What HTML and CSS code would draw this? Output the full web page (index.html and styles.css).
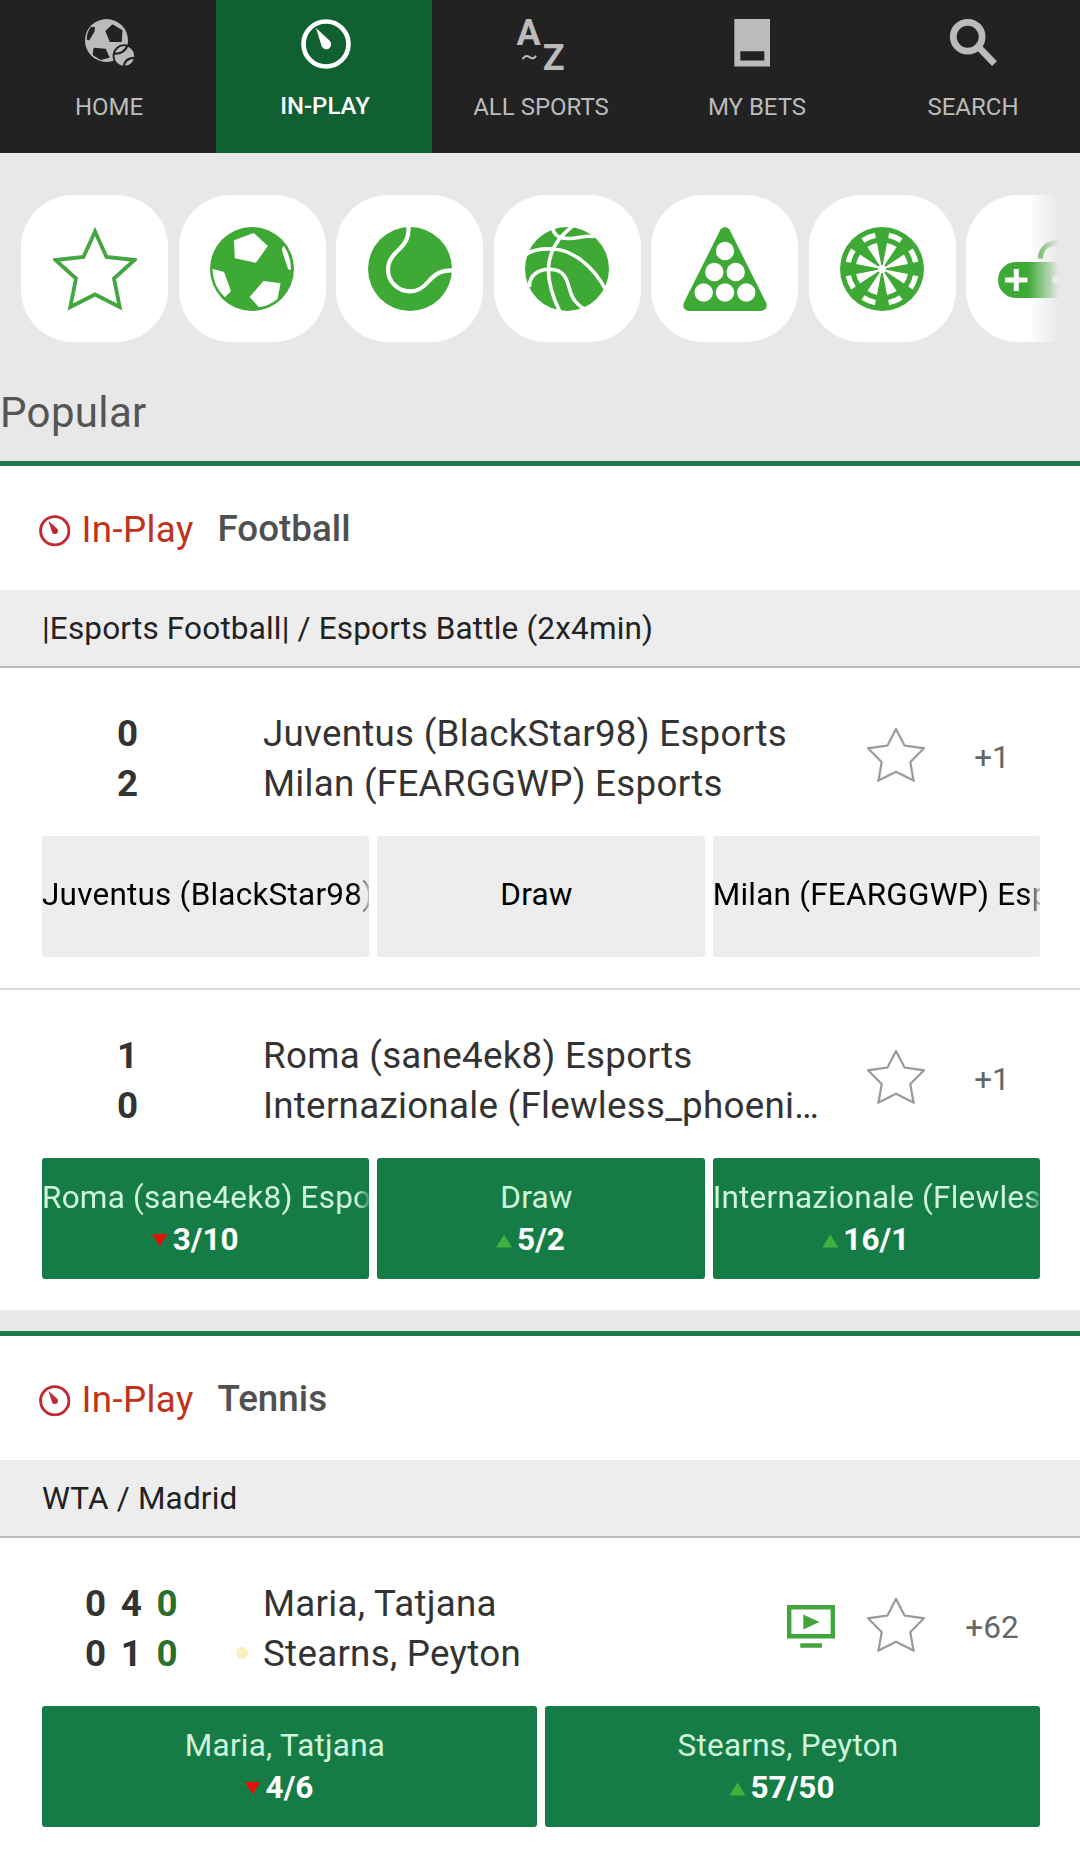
FILE: index.html
```html
<!DOCTYPE html>
<html lang="en">
<head>
<meta charset="utf-8">
<title>In-Play</title>
<link rel="stylesheet" href="styles.css">
</head>
<body>
<svg class="defs" aria-hidden="true">
  <symbol id="clock" viewBox="0 0 50 50">
    <circle cx="25" cy="25" r="22.5" fill="none" stroke="currentColor" stroke-width="4.6"/>
    <path d="M15 9 L28.5 21.5 A5 5 0 1 1 20.3 26 Z" fill="currentColor"/>
  </symbol>
  <symbol id="star" viewBox="0 0 58 54">
    <path d="M29 1 L37.5 17.5 L57 20.300 L43.300 34 L46.500 52.500 L29 43.700 L11.500 52.500 L14.700 34 L1 20.300 L20.500 17.500 Z" fill="none" stroke="currentColor" stroke-width="2.200"/>
  </symbol>
</svg>

<nav class="tabs">
  <a class="tab">
    <svg class="tab-icon" viewBox="78 16 60 56">
      <g transform="translate(85 19)">
        <circle cx="21.5" cy="21.500" r="21.500" fill="#bbb"/>
        <path fill="#222" d="M27.500 5.300 37.500 11.300 36.800 23 24.800 23 20.300 12Z M5.500 8.500 Q8 7 10 8.300 L9.600 12.300 4.500 21 Q3 22 1.700 20.300 Q2 13 5.500 8.500Z M8.600 28.700 20.700 29.700 24.800 38.700 15.500 41 7.600 36Z"/>
        <circle cx="39.300" cy="37" r="11.700" fill="#222"/>
        <circle cx="39.300" cy="37" r="9.900" fill="#bbb"/>
        <path d="M29 34.500 C35 35.500 41 32 42.400 26 M39 48 C39 42 43 39 50 38.800" fill="none" stroke="#222" stroke-width="2.200"/>
      </g>
    </svg>
    <span>HOME</span>
  </a>
  <a class="tab tab-active">
    <svg class="tab-icon" viewBox="294 16 60 56"><use href="#clock" x="301" y="19" width="50" height="50"/></svg>
    <span>IN-PLAY</span>
  </a>
  <a class="tab">
    <svg class="tab-icon az" viewBox="510 16 60 56">
      <text x="516.500" y="44.700" font-size="36">A</text>
      <text x="542.700" y="70" font-size="36">Z</text>
      <path d="M522.500 59.300 C526 53.500 529 57 531 58 C533 58.800 535 57.500 536 55.700" fill="none" stroke="#bbb" stroke-width="2"/>
    </svg>
    <span>ALL SPORTS</span>
  </a>
  <a class="tab">
    <svg class="tab-icon" viewBox="726 16 60 56"><path fill="#bbb" fill-rule="evenodd" d="M734.300 19H770V66.500H734.300Z M740.300 51.300V60.500H764.300V51.300Z"/></svg>
    <span>MY BETS</span>
  </a>
  <a class="tab">
    <svg class="tab-icon" viewBox="942 16 60 56"><g fill="none" stroke="#bbb" stroke-width="6.800"><circle cx="967.700" cy="36.700" r="14.400"/><path d="M978 46.500 L994.500 63.700"/></g></svg>
    <span>SEARCH</span>
  </a>
</nav>

<div class="sports">
  <a class="sport"><svg viewBox="0 0 84 84"><path d="M42 4.500 L53.500 30 L81.500 33 L61 51.500 L66.700 80 L42 67.500 L17.300 80 L23 51.500 L2.500 33 L30.500 30 Z" fill="none" stroke="#43a640" stroke-width="3.800"/></svg></a>
  <a class="sport"><svg viewBox="0 0 84 84"><circle cx="42" cy="42" r="42" fill="#3ea935"/><path fill="#fff" d="M24 13.300 43.700 6 57.900 19 45.800 35.700 24.800 31.300Z M73.700 18.700 L72 21.300 72.700 25.700 78.200 42.300 81 43 Q81 29 73.700 18.700Z M53.400 54 70.600 56.300 67.500 72 Q59 79 48.900 80.300 L39.600 70Z M2.400 41.700 14.100 45 21 64.300 14.800 70.300 Q3 59 2.400 41.700Z"/></svg></a>
  <a class="sport"><svg viewBox="0 0 84 84"><circle cx="42" cy="42" r="42" fill="#3ea935"/><path d="M40.600 -1 C41 10 38 16 31 22.500 C24 28.500 20 34 20 42.500 C20 55 30 64.300 42 64.300 C50 64.300 55 61 61 54 C68 46 73 43.500 85 43.300" fill="none" stroke="#fff" stroke-width="4.200"/></svg></a>
  <a class="sport"><svg viewBox="0 0 84 84"><circle cx="42" cy="42" r="42" fill="#3ea935"/><path d="M49 -2 Q32 11 27 25 Q17 48 35 85 M27.300 0 Q29 9 36 10.500 C48 14 56 8 69 9.500 M0 28 C8 22 18 21.500 28 22 C48 23 68 39 81 63 M4.500 60 C4 48 14 42 25 42.300 C47 43 41 64 50 74 Q54 79 61 83" fill="none" stroke="#fff" stroke-width="3.600"/></svg></a>
  <a class="sport"><svg viewBox="0 0 84 84"><path d="M37.500 2.500 Q42 -2.500 46.500 2.500 L83.300 76 Q85 82.500 78.500 84 H5.500 Q-1 82.500 .7 76Z" fill="#3ea935"/><g fill="#fff"><circle cx="42" cy="24" r="9.200"/><circle cx="31.300" cy="45" r="9.200"/><circle cx="52.700" cy="45" r="9.200"/><circle cx="20.700" cy="65.500" r="9.200"/><circle cx="42" cy="65.500" r="9.200"/><circle cx="63.300" cy="65.500" r="9.200"/></g></svg></a>
  <a class="sport"><svg viewBox="0 0 84 84"><circle cx="42" cy="42" r="42" fill="#3ea935"/><g fill="none" stroke="#fff" stroke-dasharray="1 1" stroke-dashoffset="-.5"><circle cx="42" cy="42" r="34.300" stroke-width="5.400" pathLength="16"/><circle cx="42" cy="42" r="13.200" stroke-width="26.400" pathLength="16"/></g><circle cx="42" cy="42" r="4" fill="#fff"/></svg></a>
  <a class="sport"><svg viewBox="0 0 84 84"><rect x="0" y="35" width="84" height="36" rx="18" fill="#3ea935"/><path d="M42.500 31.500 C42.500 22 49 16 61 15.500" fill="none" stroke="#3ea935" stroke-width="5"/><path d="M7 53H29.500M18.300 42V64" stroke="#fff" stroke-width="5"/><circle cx="58.500" cy="52.700" r="4.300" fill="#fff"/></svg></a>
</div>

<h2 class="heading">Popular</h2>

<section class="group">
  <header class="group-head">
    <svg class="group-clock"><use href="#clock"/></svg>
    <span class="live">In-Play</span>
    <span class="name">Football</span>
  </header>
  <div class="league">|Esports Football| / Esports Battle (2x4min)</div>

  <article class="event">
    <div class="info">
      <div class="scores single"><div class="score"><b>0</b></div><div class="score"><b>2</b></div></div>
      <div class="teams"><div>Juventus (BlackStar98) Esports</div><div>Milan (FEARGGWP) Esports</div></div>
      <svg class="fav"><use href="#star"/></svg>
      <span class="more">+1</span>
    </div>
    <div class="odds suspended">
      <a class="pick"><span class="label long">Juventus (BlackStar98) Esports</span></a>
      <a class="pick"><span class="label">Draw</span></a>
      <a class="pick"><span class="label long">Milan (FEARGGWP) Esports</span></a>
    </div>
  </article>

  <article class="event">
    <div class="info">
      <div class="scores single"><div class="score"><b>1</b></div><div class="score"><b>0</b></div></div>
      <div class="teams"><div>Roma (sane4ek8) Esports</div><div>Internazionale (Flewless_phoeni…</div></div>
      <svg class="fav"><use href="#star"/></svg>
      <span class="more">+1</span>
    </div>
    <div class="odds">
      <a class="pick"><span class="label long">Roma (sane4ek8) Esports</span><span class="price"><i class="down"></i>3/10</span></a>
      <a class="pick"><span class="label">Draw</span><span class="price"><i class="up"></i>5/2</span></a>
      <a class="pick"><span class="label long">Internazionale (Flewless_phoenix)</span><span class="price"><i class="up"></i>16/1</span></a>
    </div>
  </article>
</section>

<section class="group">
  <header class="group-head">
    <svg class="group-clock"><use href="#clock"/></svg>
    <span class="live">In-Play</span>
    <span class="name">Tennis</span>
  </header>
  <div class="league">WTA / Madrid</div>

  <article class="event">
    <div class="info">
      <div class="scores">
        <div class="score"><b>0</b><b>4</b><b class="point">0</b></div>
        <div class="score"><b>0</b><b>1</b><b class="point">0</b><i class="serve"></i></div>
      </div>
      <div class="teams"><div>Maria, Tatjana</div><div>Stearns, Peyton</div></div>
      <svg class="tv" viewBox="0 0 48 43"><path d="M2.200 2.200H45.800V31.300H2.200Z" fill="none" stroke="#43a63c" stroke-width="4.400"/><path d="M16.300 9.500 32.600 17 16.300 24.500Z M13.300 38.300H35V42.800H13.300Z" fill="#43a63c"/></svg>
      <svg class="fav"><use href="#star"/></svg>
      <span class="more">+62</span>
    </div>
    <div class="odds">
      <a class="pick"><span class="label">Maria, Tatjana</span><span class="price"><i class="down"></i>4/6</span></a>
      <a class="pick"><span class="label">Stearns, Peyton</span><span class="price"><i class="up"></i>57/50</span></a>
    </div>
  </article>
</section>
</body>
</html>
```
FILE: styles.css
```css
* { box-sizing: border-box; }

body {
  margin: 0;
  width: 1080px;
  height: 1858px;
  overflow: hidden;
  background: #e8e8e8;
  color: #333;
  font-family: Roboto, "Liberation Sans", sans-serif;
  display: flex;
  flex-direction: column;
}

.defs { display: none; }
svg { display: block; flex: none; }

/* Top navigation */
.tabs {
  display: grid;
  grid-template-columns: repeat(5, 1fr);
  height: 153px;
  background: #222;
}
.tab {
  display: flex;
  flex-direction: column;
  align-items: center;
  gap: 21px;
  padding-top: 16px;
  color: #bbb;
  font-size: 24px;
  line-height: 28px;
}
.tab span { padding-left: 2px; }
.tab-icon { width: 60px; height: 56px; }
.az { fill: #bbb; font-weight: 700; }
.tab-active {
  gap: 20px;
  background: #106032;
  color: #fff;
  font-weight: 500;
}

/* Sport shortcuts */
.sports {
  position: relative;
  display: flex;
  gap: 10.5px;
  height: 147px;
  margin: 42px 21px 45px;
  overflow: hidden;
}
.sports::after {
  content: "";
  position: absolute;
  inset: 0 0 0 auto;
  width: 31px;
  background: linear-gradient(to right, rgba(232, 232, 232, 0), #e8e8e8);
}
.sport {
  flex: 0 0 147px;
  display: flex;
  align-items: center;
  justify-content: center;
  border-radius: 52px;
  background: #fff;
}
.sport svg { width: 84px; height: 84px; }

.heading {
  margin: 0;
  padding: 1px 0 23px;
  font-size: 42px;
  line-height: 50px;
  font-weight: 400;
  letter-spacing: .35px;
  color: #555;
}

/* Event groups */
.group {
  border-top: 5px solid #1e7a4a;
  background: #fff;
}
.group + .group { margin-top: 21px; flex: 1; }
.group-head {
  display: flex;
  align-items: center;
  height: 124px;
  padding-left: 39px;
  font-size: 36.75px;
}
.group-clock {
  width: 31.5px;
  height: 31.5px;
  margin-top: 6px;
  color: #c22a33;
}
.live {
  width: 136px;
  margin-left: 11px;
  padding-top: 2px;
  color: #c0321b;
  letter-spacing: .35px;
}
.name { font-weight: 500; color: #505050; }
.league {
  height: 78px;
  padding-left: 42px;
  border-bottom: 2px solid #bababa;
  background: #ededed;
  color: #222;
  font-size: 31.5px;
  line-height: 78px;
  letter-spacing: .17px;
}

.event { padding: 40px 40px 31px 42px; }
.event + .event { border-top: 2px solid #dadada; }
.info {
  display: flex;
  align-items: center;
  height: 100px;
  font-size: 36.75px;
  line-height: 50px;
}
.scores { width: 220px; padding: 1px 0 0 43px; }
.scores.single { padding-left: 75px; }
.score { display: flex; align-items: center; gap: 14.7px; height: 50px; }
.point { color: #2c6f2c; }
.serve {
  width: 12px;
  height: 12px;
  margin: -1px 0 0 44px;
  border-radius: 50%;
  background: #faf0bb;
}
.teams {
  flex: 1;
  padding: 1px 0 0 1px;
  white-space: nowrap;
  letter-spacing: .27px;
}
.tv { width: 48px; height: 43px; margin: 37px 32px 40px 0; }
.fav { width: 58px; height: 54px; margin: 0 19px 7px 0; color: #999; }
.more { width: 96px; text-align: center; color: #666; font-size: 31.5px; }

/* Selections */
.odds {
  display: grid;
  grid-auto-flow: column;
  grid-auto-columns: minmax(0, 1fr);
  gap: 8px;
  margin-top: 28px;
}
.pick {
  height: 121px;
  padding-top: 19px;
  border-radius: 3px;
  background: #167c45;
  color: #fff;
  font-size: 31.5px;
  line-height: 42px;
  text-align: center;
  overflow: hidden;
}
.label {
  display: block;
  padding-right: 9px;
  color: #d0f5dd;
  letter-spacing: .22px;
  white-space: nowrap;
  overflow: hidden;
}
.label.long {
  padding: 0;
  text-align: left;
  -webkit-mask-image: linear-gradient(to right, #000 calc(100% - 13px), rgba(0, 0, 0, .2));
  mask-image: linear-gradient(to right, #000 calc(100% - 13px), rgba(0, 0, 0, .2));
}
.price {
  display: flex;
  align-items: center;
  justify-content: center;
  gap: 5px;
  padding-right: 21px;
  font-weight: 700;
}
.up, .down { width: 16px; height: 13px; }
.up { background: #3fb23c; clip-path: polygon(50% 0, 100% 100%, 0 100%); margin-top: 2px; }
.down { background: #e31208; clip-path: polygon(0 0, 100% 0, 50% 100%); }
.suspended .pick { padding-top: 38px; background: #ededed; }
.suspended .label { color: #000; }
```
